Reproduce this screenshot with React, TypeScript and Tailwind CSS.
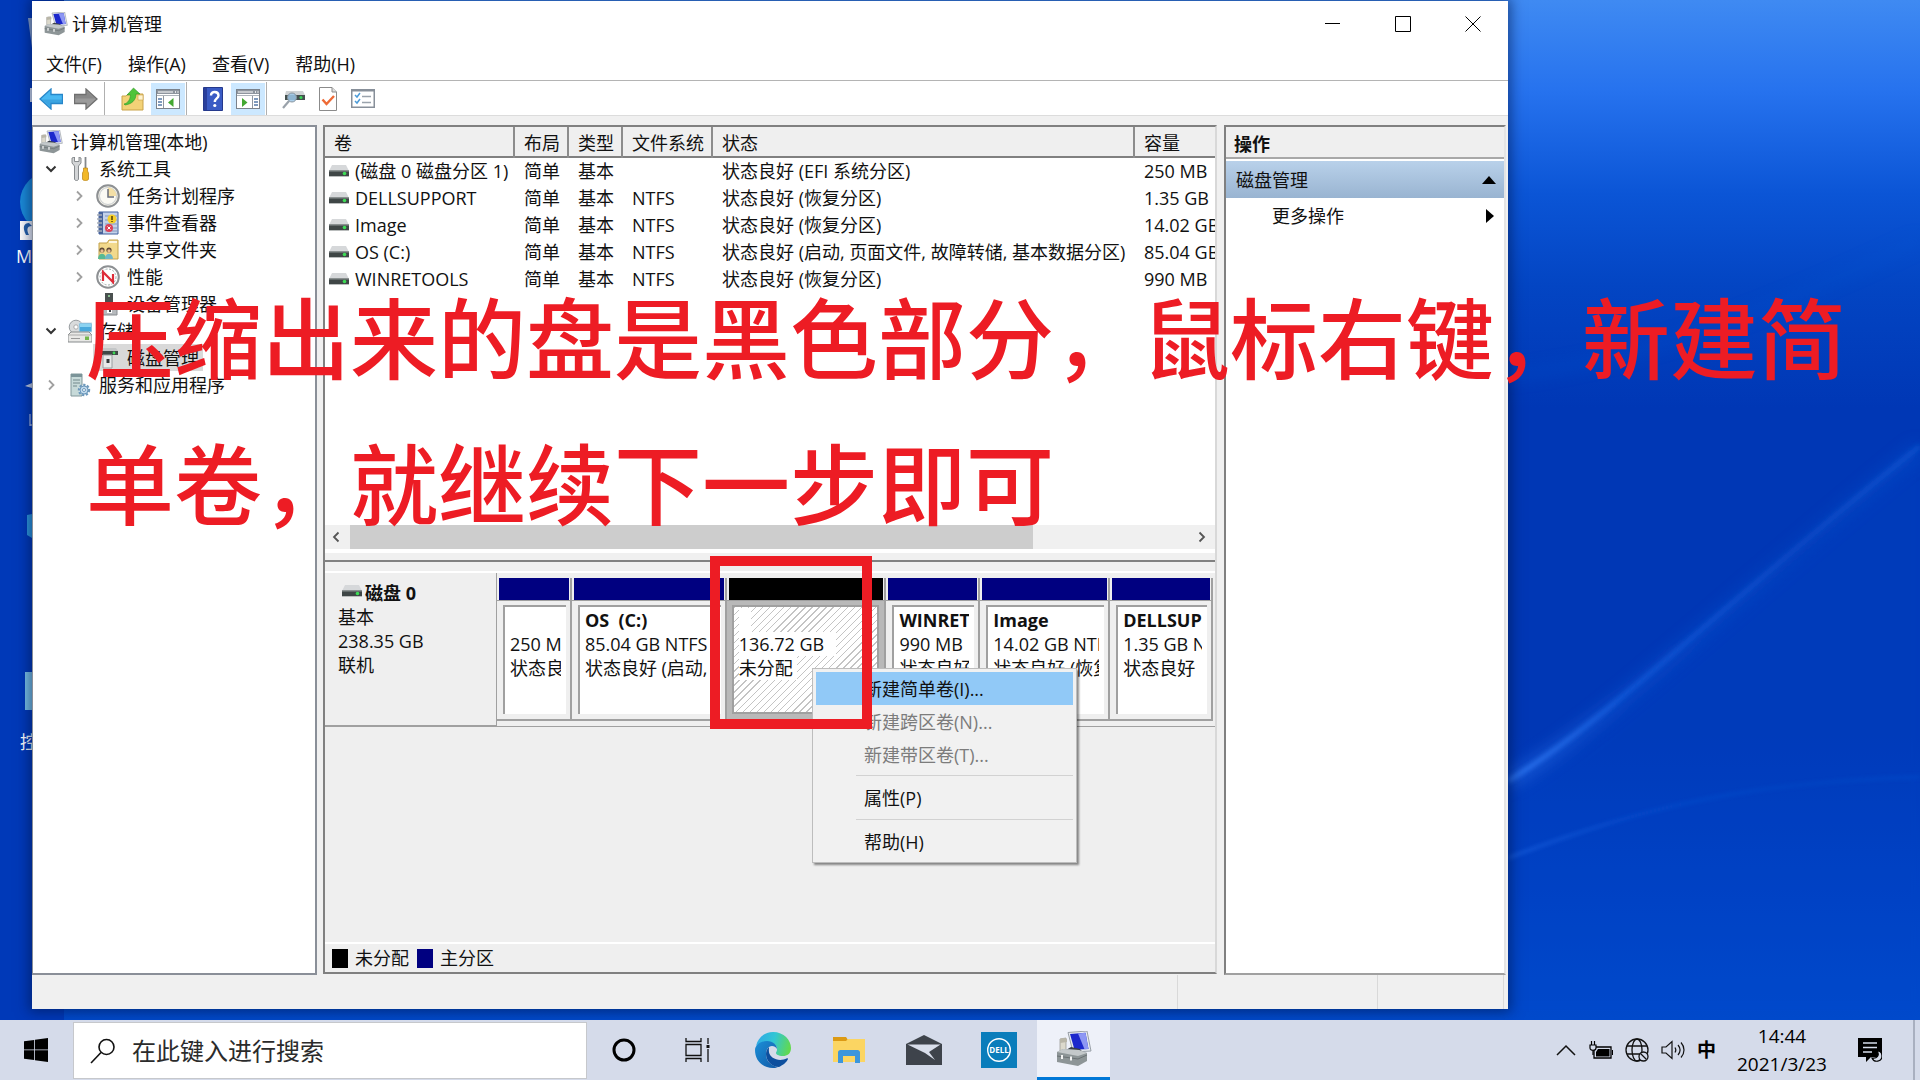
import type { ReactNode } from 'react'

type IconProps = { className?: string }

function ComputerIcon({ className = 'w-6 h-6' }: IconProps) {
  return (
    <svg viewBox="0 0 36 36" className={className}>
      <path d="M4 8l6-1v14l-6 1z" fill="#dcd9cc" stroke="#8f8f8a" strokeWidth=".7" />
      <path d="M4 8l3-1 4 1v3l-7 1z" fill="#b9b6a8" />
      <path d="M12 1.500L31 0l4 20-18 1z" fill="#e6eaef" stroke="#8f969e" strokeWidth=".9" />
      <path d="M14 3l15.500-1.200L32.500 18l-14 .8z" fill="#1c28cc" />
      <path d="M22 2.500l7.500-.7L32.500 18l-4 .2z" fill="#8d97f4" />
      <path d="M10 19l5-3 9 2 4 5H8z" fill="#3a3f46" />
      <path d="M1 21l6-3 16 1 8 3v8l-9 5-21-4z" fill="#8d9597" />
      <path d="M1 21l6-3 16 1 8 3-9 3z" fill="#c3c8ca" />
      <path d="M1 25l21 3 9-4" fill="none" stroke="#6a7174" />
      <path d="M6 24v4M15 25.500v4" stroke="#fff" strokeWidth="1.800" />
    </svg>
  )
}

function DriveIcon({ className = 'w-5 h-3' }: IconProps) {
  return (
    <svg viewBox="0 0 20 12" className={className}>
      <path d="M3 0h14l3 6H0z" fill="#d6d8da" />
      <path d="M0 5.500h20V11H0z" fill="#3f4646" />
      <path d="M0 5.500h20v1H0z" fill="#8a9090" />
      <circle cx="15.500" cy="8.500" r="1.800" fill="#3ddc55" />
      <path d="M0 11h20v1H0z" fill="#b9bcbc" />
    </svg>
  )
}

function Arrow({ dark, light, flip }: { dark: string; light: string; flip?: boolean }) {
  return (
    <svg viewBox="0 0 24 22" className={flip ? 'w-6 h-[22px] rotate-180' : 'w-6 h-[22px]'}>
      <path d="M1 11L12 1v5.500h11.500v9H12V21z" fill={light} stroke={dark} strokeWidth="1.300" />
      <path d="M3 11.500h20V15H11.500v4z" fill={dark} opacity=".4" />
    </svg>
  )
}

function FolderUpIcon() {
  return (
    <svg viewBox="0 0 24 24" className="w-6 h-6">
      <path d="M1 9h4l2-2h15v16H1z" fill="#f3d277" stroke="#c9a34a" />
      <path d="M17 8h5v5h-5z" fill="#fff3cf" stroke="#c9a34a" strokeWidth=".6" />
      <path d="M3 17c4-1 6-4 6.500-9H6l6.500-7L19 7h-4c0 6-4 10-11 11z" fill="#4fc43a" stroke="#2f9626" strokeWidth=".6" />
    </svg>
  )
}

function PaneIcon({ right }: { right?: boolean }) {
  return (
    <svg viewBox="0 0 24 20" className="w-6 h-5">
      <rect x=".5" y=".5" width="23" height="19" fill="#fff" stroke="#7b828b" />
      <path d="M1 1h22v4H1z" fill="#8e959e" />
      <path d="M2 3h15" stroke="#fff" />
      <path d="M19 3h1M21.500 3h1" stroke="#fff" strokeWidth="1.500" />
      <path d="M1 6.500h22" stroke="#aeb4bb" />
      {right ? (
        <>
          <path d="M16.500 7v12" stroke="#9097a0" />
          <path d="M18 10h4M18 13h4M18 16h4" stroke="#557aa8" strokeWidth="1.400" />
          <path d="M6 9v9l5.500-4.500z" fill="#43a832" />
        </>
      ) : (
        <>
          <path d="M7.500 7v12" stroke="#9097a0" />
          <path d="M2 10h4M2 13h4M2 16h4" stroke="#557aa8" strokeWidth="1.400" />
          <path d="M17.500 9v9L12 13.500z" fill="#43a832" />
        </>
      )}
    </svg>
  )
}

function HelpIcon() {
  return (
    <svg viewBox="0 0 20 24" className="w-5 h-6">
      <path d="M.5.5h19v23H.5z" fill="#3a5bc4" stroke="#25398c" />
      <path d="M1 1h3v22H1z" fill="#2a3f9c" />
      <path d="M8 8.500C8 3.500 15.500 4 15.500 8.500c0 3-3.700 3-3.700 6.500" fill="none" stroke="#fff" strokeWidth="2.400" />
      <circle cx="11.800" cy="18.500" r="1.600" fill="#fff" />
    </svg>
  )
}

function RescanIcon() {
  return (
    <svg viewBox="0 0 24 20" className="w-6 h-5">
      <path d="M5 2h17l2 4H4z" fill="#d0d3d5" />
      <path d="M4 6h20v5H4z" fill="#45514f" />
      <circle cx="20" cy="8.500" r="1.500" fill="#39d657" />
      <path d="M8 12l-6 7" stroke="#9aa2aa" strokeWidth="2.200" />
      <circle cx="11" cy="8.500" r="4.500" fill="#9cc7e8" fillOpacity=".85" stroke="#8b969f" />
    </svg>
  )
}

function CheckDocIcon() {
  return (
    <svg viewBox="0 0 18 24" className="w-[18px] h-6">
      <path d="M.5.5H13L17.500 5v18.500H.5z" fill="#fff" stroke="#8b8b8b" />
      <path d="M13 .5V5h4.500" fill="#ddd" stroke="#8b8b8b" />
      <path d="M3.500 12.500l4 4.500 7.500-8" fill="none" stroke="#ee6a36" strokeWidth="2.400" />
    </svg>
  )
}

function ListIcon() {
  return (
    <svg viewBox="0 0 24 19" className="w-6 h-[19px]">
      <rect x=".75" y=".75" width="22.500" height="17.500" fill="#fff" stroke="#878f99" strokeWidth="1.500" />
      <path d="M1 1.500h22" stroke="#878f99" strokeWidth="2" />
      <path d="M4 6l2 2 3-4M4 12l2 2 3-4" fill="none" stroke="#4b9bd8" strokeWidth="1.500" />
      <path d="M11 7.500h9M11 13.500h9" stroke="#9aa3ad" strokeWidth="1.500" />
    </svg>
  )
}

function ToolsIcon() {
  return (
    <svg viewBox="0 0 18 24" className="w-[18px] h-6">
      <path d="M1 1v5l2.500 3v13c0 2 4 2 4 0V9L10 6V1L8 0v4.500H3.500V0z" fill="#d3d5d7" stroke="#7d8185" strokeWidth=".9" />
      <path d="M14.500 0v12" stroke="#84888c" strokeWidth="1.800" />
      <path d="M12.500 11h4v3l1 2v6c0 2-6 2-6 0v-6l1-2z" fill="#f2b828" stroke="#b98213" strokeWidth=".7" />
    </svg>
  )
}

function ClockIcon() {
  return (
    <svg viewBox="0 0 24 24" className="w-6 h-6">
      <circle cx="12" cy="12" r="10.800" fill="#f2f0e6" stroke="#8d9093" strokeWidth="2" />
      <circle cx="12" cy="12" r="8.500" fill="#fbfaf4" stroke="#c9cdd0" />
      <path d="M12 12V3.500A8.500 8.500 0 0 1 20.500 12z" fill="#f3dfa6" />
      <path d="M12 5v8h6" fill="none" stroke="#6b6f7a" strokeWidth="1.500" />
    </svg>
  )
}

function EventIcon() {
  return (
    <svg viewBox="0 0 22 24" className="w-[22px] h-6">
      <path d="M2 1h19v22H2z" fill="#c4d2ea" stroke="#41619f" />
      <path d="M2 1h4v22H2z" fill="#47639c" />
      <path d="M8 5h12M8 9h12M8 13h12M8 17h12M8 20h12" stroke="#8497bb" />
      <path d="M0 4h5M0 8h5M0 12h5M0 16h5M0 20h5" stroke="#a6adb8" strokeWidth="1.500" />
      <circle cx="15" cy="8" r="4.500" fill="#f6cf2c" />
      <path d="M15 5v4M15 10v1" stroke="#443300" strokeWidth="1.400" />
      <circle cx="12" cy="17" r="4" fill="#dc4259" />
      <path d="M10.500 15.500l3 3m0-3l-3 3" stroke="#fff" />
    </svg>
  )
}

function SharedIcon() {
  return (
    <svg viewBox="0 0 22 22" className="w-[22px] h-[22px]">
      <path d="M2 4h8l2-3h9v19H2z" fill="#f2d98c" stroke="#c3a24b" />
      <path d="M12 3h8" stroke="#fff" strokeWidth="1.500" />
      <circle cx="5" cy="11" r="2.600" fill="#5e4a35" />
      <circle cx="12" cy="11" r="2.600" fill="#5e4a35" />
      <path d="M1 20c0-7 8-7 8 0z" fill="#58b993" />
      <path d="M8 20c0-7 8-7 8 0z" fill="#71b7c8" />
      <circle cx="5" cy="12" r="1.700" fill="#e9bd93" />
      <circle cx="12" cy="12" r="1.700" fill="#e9bd93" />
    </svg>
  )
}

function GaugeIcon() {
  return (
    <svg viewBox="0 0 24 24" className="w-6 h-6">
      <circle cx="12" cy="12" r="10.800" fill="#fff" stroke="#8d9093" strokeWidth="2" />
      <circle cx="12" cy="12" r="8" fill="none" stroke="#9cacaa" strokeDasharray="2 1.500" />
      <path d="M7 16V7l10 10V9" fill="none" stroke="#de2c38" strokeWidth="2.200" />
    </svg>
  )
}

function DeviceIcon() {
  return (
    <svg viewBox="0 0 20 24" className="w-5 h-6">
      <path d="M7 1h8v14H7z" fill="#4a504f" />
      <circle cx="11" cy="4" r="1" fill="#9fe6a7" />
      <path d="M0 14h19v9H0z" fill="#b6babd" stroke="#898d90" />
      <path d="M9 16h5v5H9z" fill="#fff" />
      <path d="M11 16h2v4h-2z" fill="#3d4447" />
    </svg>
  )
}

function StorageIcon() {
  return (
    <svg viewBox="0 0 24 24" className="w-6 h-6">
      <circle cx="8" cy="8" r="6.800" fill="#d9dbdc" stroke="#989da0" />
      <circle cx="8" cy="8" r="2.200" fill="#fff" stroke="#aaa" />
      <path d="M11 4h13v9H11z" fill="#49a9dc" stroke="#c9dbe5" />
      <path d="M12 5h11v3H12z" fill="#8bd3f1" />
      <path d="M3 13h18l3 3v7H0v-7z" fill="#e8e8e6" stroke="#878b8d" />
      <path d="M0 16h24" stroke="#aaa" />
      <path d="M17 17.500h4V21h-4z" fill="#73b64c" />
      <path d="M3 19.500h9" stroke="#999" />
    </svg>
  )
}

function DiskMgmtIcon() {
  return (
    <svg viewBox="0 0 20 22" className="w-5 h-[22px]">
      <path d="M3 1h15l2 3H1z" fill="#c3c6c7" />
      <path d="M1 4h19v4H1z" fill="#3f4746" />
      <circle cx="16" cy="6" r="1.400" fill="#3ed856" />
      <path d="M5 8h9v13H5z" fill="#e8e9ea" stroke="#9a9ea1" />
      <path d="M8.500 12h3v4h-3z" fill="#33383a" />
    </svg>
  )
}

function ServicesIcon() {
  return (
    <svg viewBox="0 0 22 24" className="w-[22px] h-6">
      <path d="M2 1h11v22H2z" fill="#c7dad9" stroke="#81989b" />
      <path d="M2 1h11v3H2z" fill="#7b9499" />
      <path d="M4 7h7M4 10h7M4 13h4" stroke="#73898c" />
      <circle cx="15" cy="17" r="5" fill="#d6e6f2" stroke="#6c98bb" strokeWidth="2.400" strokeDasharray="2.200 1.500" />
      <circle cx="15" cy="17" r="4" fill="#c2dbed" stroke="#6c98bb" />
      <circle cx="15" cy="17" r="1.500" fill="#fff" stroke="#6c98bb" />
    </svg>
  )
}

function EdgeIcon({ className = 'w-9 h-9' }: IconProps) {
  return (
    <svg viewBox="0 0 36 36" className={className}>
      <defs>
        <linearGradient id="edgeTop" x1="0" y1=".3" x2="1" y2=".5">
          <stop offset="0" stopColor="#2fa9e6" />
          <stop offset=".5" stopColor="#31c6d4" />
          <stop offset="1" stopColor="#62d94e" />
        </linearGradient>
        <linearGradient id="edgeLow" x1="0" y1="0" x2="1" y2="1">
          <stop offset="0" stopColor="#1b8fd8" />
          <stop offset="1" stopColor="#1259a6" />
        </linearGradient>
      </defs>
      <path d="M1 14C3 5 10 0 18 0c11 0 18 8 18 16 0 6-4 8-8 8-5 0-7-2-7-3 0-1 1-1 1-4 0-4-4-7-9-7-6 0-11 3-12 4z" fill="url(#edgeTop)" />
      <path d="M0 18c0-5 6-9 12-9 6 0 10 4 10 8-1-2-3-3-5-3-4 0-6 4-6 8 0 7 5 12 12 13-2 1-4 1-5 1C7 36 0 28 0 18z" fill="url(#edgeLow)" />
      <path d="M14 15c-2 2-3 4-3 7 0 7 6 13 13 13 4-2 8-5 9-8 0-1-.5-1-1-.7-8 4-17 0-18-6-.3-2 0-4 0-5.300z" fill="#0d4f9e" />
    </svg>
  )
}

function ExplorerIcon() {
  return (
    <svg viewBox="0 0 32 28" className="w-8 h-7">
      <path d="M0 1h13l2 3-2 3H0z" fill="#dc9a14" />
      <path d="M0 5h13l2-2h17v23H0z" fill="#fbd562" />
      <path d="M5 27V16.500C5 15 6 14 7.500 14h17c1.500 0 2.500 1 2.500 2.500V27h-5v-7H10v7z" fill="#3c96dc" />
    </svg>
  )
}

function MailIcon() {
  return (
    <svg viewBox="0 0 36 30" className="w-9 h-[30px]">
      <path d="M0 9L18 0l18 9v21H0z" fill="#3e434b" />
      <path d="M1.500 9.500h33L23 17l6 8-10-7z" fill="#d9deeb" />
    </svg>
  )
}

function DellIcon() {
  return (
    <svg viewBox="0 0 36 36" className="w-9 h-9">
      <path d="M0 0h36v36H0z" fill="#0a7dbb" />
      <circle cx="18" cy="18" r="11.300" fill="none" stroke="#fff" strokeWidth="1.400" />
      <text x="18" y="21" textAnchor="middle" fontSize="8" fontWeight="700" fill="#fff" fontFamily="Open Sans, sans-serif">DELL</text>
    </svg>
  )
}

function TaskViewIcon() {
  return (
    <svg viewBox="0 0 25 24" className="w-[25px] h-6" fill="none" stroke="#111" strokeWidth="1.300">
      <path d="M1 0v3.500h15V0M1 24v-3.500h15V24M1 6.500h15v11H1zM23 0v6M23 11v13" />
      <path d="M21.500 7h3v3h-3z" fill="#111" stroke="none" />
    </svg>
  )
}

const columns = ['卷', '布局', '类型', '文件系统', '状态', '容量']

const volumes = [
  ['(磁盘 0 磁盘分区 1)', '简单', '基本', '', '状态良好 (EFI 系统分区)', '250 MB'],
  ['DELLSUPPORT', '简单', '基本', 'NTFS', '状态良好 (恢复分区)', '1.35 GB'],
  ['Image', '简单', '基本', 'NTFS', '状态良好 (恢复分区)', '14.02 GB'],
  ['OS (C:)', '简单', '基本', 'NTFS', '状态良好 (启动, 页面文件, 故障转储, 基本数据分区)', '85.04 GB'],
  ['WINRETOOLS', '简单', '基本', 'NTFS', '状态良好 (恢复分区)', '990 MB'],
]

const partitions = [
  { name: '', size: '250 MB', status: '状态良好' },
  { name: 'OS  (C:)', size: '85.04 GB NTFS', status: '状态良好 (启动,' },
  { name: '', size: '136.72 GB', status: '未分配', free: true },
  { name: 'WINRETOOLS', size: '990 MB', status: '状态良好' },
  { name: 'Image', size: '14.02 GB NTFS', status: '状态良好 (恢复' },
  { name: 'DELLSUPPORT', size: '1.35 GB NTFS', status: '状态良好' },
]

function Chevron({ open }: { open?: boolean }) {
  return open ? (
    <svg viewBox="0 0 12 12" className="w-3 h-3">
      <path d="M1.500 3.500L6 8l4.500-4.500" fill="none" stroke="#333" strokeWidth="2" />
    </svg>
  ) : (
    <svg viewBox="0 0 12 12" className="w-3 h-3">
      <path d="M4 1.500L8.500 6 4 10.500" fill="none" stroke="#a0a0a0" strokeWidth="1.800" />
    </svg>
  )
}

interface TreeRowProps {
  level: 1 | 2
  icon: ReactNode
  label: string
  open?: boolean
  leaf?: boolean
  selected?: boolean
}

function TreeRow({ level, icon, label, open, leaf, selected }: TreeRowProps) {
  return (
    <li className={level === 1 ? 'flex items-center h-[27px] pl-3' : 'flex items-center h-[27px] pl-10'}>
      <span className="w-3 shrink-0">{!leaf && <Chevron open={open} />}</span>
      <span className={selected ? 'flex items-center h-full ml-2 pr-1 bg-[#d9d9d9]' : 'flex items-center h-full ml-2 pr-1'}>
        <span className="w-[30px] shrink-0 flex justify-center">{icon}</span>
        <span className="ml-1 whitespace-nowrap">{label}</span>
      </span>
    </li>
  )
}

function ToolButton({ children, active, label }: { children: ReactNode; active?: boolean; label: string }) {
  return (
    <button
      aria-label={label}
      className={active ? 'w-[34px] h-8 flex items-center justify-center bg-[#cce8ff]' : 'w-[34px] h-8 flex items-center justify-center'}
    >
      {children}
    </button>
  )
}

function TitleBar() {
  return (
    <div className="flex items-center h-[47px] pl-3 pb-[2px]">
      <ComputerIcon />
      <h1 className="ml-1 flex-1">计算机管理</h1>
      <button aria-label="最小化" className="w-[70px] h-full flex items-center justify-center">
        <svg viewBox="0 0 16 16" className="w-4 h-4"><path d="M0 7.500h15" stroke="#000" /></svg>
      </button>
      <button aria-label="最大化" className="w-[70px] h-full flex items-center justify-center">
        <svg viewBox="0 0 16 16" className="w-4 h-4"><path d="M.5.5h15v15H.5z" fill="none" stroke="#000" /></svg>
      </button>
      <button aria-label="关闭" className="w-[70px] h-full flex items-center justify-center">
        <svg viewBox="0 0 16 16" className="w-4 h-4"><path d="M.5.5l15 15m0-15l-15 15" stroke="#000" /></svg>
      </button>
    </div>
  )
}

function Toolbar() {
  return (
    <div className="flex items-center h-9 pt-px pl-[2px] border-y border-[#b4b4b4] border-b-[#dcdcdc] gap-px">
      <ToolButton label="后退"><Arrow dark="#2786c9" light="#49b8f2" /></ToolButton>
      <ToolButton label="前进"><Arrow dark="#6f6f6f" light="#9a9a9a" flip /></ToolButton>
      <span className="w-px h-full bg-[#b0b0b0] mr-[10px]" />
      <ToolButton label="向上"><FolderUpIcon /></ToolButton>
      <ToolButton label="控制台树" active><PaneIcon /></ToolButton>
      <span className="w-px h-full bg-[#b0b0b0] mr-2" />
      <ToolButton label="帮助"><HelpIcon /></ToolButton>
      <ToolButton label="操作窗格" active><PaneIcon right /></ToolButton>
      <span className="w-px h-full bg-[#b0b0b0] mr-2" />
      <ToolButton label="重新扫描"><RescanIcon /></ToolButton>
      <ToolButton label="检查"><CheckDocIcon /></ToolButton>
      <ToolButton label="列表"><ListIcon /></ToolButton>
    </div>
  )
}

function Tree() {
  return (
    <nav className="w-[285px] shrink-0 bg-white border-2 border-[#8a8f98] border-l pt-px">
      <div className="flex items-center h-[27px] pl-[6px]">
        <ComputerIcon />
        <span className="ml-2">计算机管理(本地)</span>
      </div>
      <ul>
        <TreeRow level={1} open icon={<ToolsIcon />} label="系统工具" />
        <TreeRow level={2} icon={<ClockIcon />} label="任务计划程序" />
        <TreeRow level={2} icon={<EventIcon />} label="事件查看器" />
        <TreeRow level={2} icon={<SharedIcon />} label="共享文件夹" />
        <TreeRow level={2} icon={<GaugeIcon />} label="性能" />
        <TreeRow level={2} leaf icon={<DeviceIcon />} label="设备管理器" />
        <TreeRow level={1} open icon={<StorageIcon />} label="存储" />
        <TreeRow level={2} leaf selected icon={<DiskMgmtIcon />} label="磁盘管理" />
        <TreeRow level={1} icon={<ServicesIcon />} label="服务和应用程序" />
      </ul>
    </nav>
  )
}

function VolumeList() {
  return (
    <div className="h-[435px] shrink-0 flex flex-col bg-white border-b-2 border-[#808080]">
      <div className="flex-1 overflow-hidden">
        <table className="w-full table-fixed border-collapse">
          <colgroup>
            <col className="w-[189px]" />
            <col className="w-[54px]" />
            <col className="w-[54px]" />
            <col className="w-[90px]" />
            <col className="w-[422px]" />
            <col />
          </colgroup>
          <thead>
            <tr className="h-[30px] bg-[#efefef] border-b-2 border-[#808080]">
              {columns.map((c) => (
                <th key={c} className="pl-[9px] pt-[3px] font-normal text-left whitespace-nowrap border-r-2 border-[#8c8c8c] last:border-r-0">{c}</th>
              ))}
            </tr>
          </thead>
          <tbody>
            {volumes.map((row) => (
              <tr key={row[0]} className="h-[27px]">
                {row.map((cell, i) => (
                  <td key={i} className={i === 0 ? 'pl-1 whitespace-nowrap' : 'pl-[10px] whitespace-nowrap overflow-hidden'}>
                    {i === 0 ? <span className="flex items-center gap-[6px]"><DriveIcon />{cell}</span> : cell}
                  </td>
                ))}
              </tr>
            ))}
          </tbody>
        </table>
      </div>
      <div className="flex h-6 bg-[#f0f0f0]">
        <button aria-label="向左滚动" className="w-[25px] pr-1 flex items-center justify-center">
          <svg viewBox="0 0 8 12" className="w-2 h-3"><path d="M6.500 1.500L2 6l4.500 4.500" fill="none" stroke="#555" strokeWidth="1.800" /></svg>
        </button>
        <div className="flex-1">
          <div className="w-[81.500%] h-full bg-[#cdcdcd]" />
        </div>
        <button aria-label="向右滚动" className="w-[27px] flex items-center justify-center">
          <svg viewBox="0 0 8 12" className="w-2 h-3"><path d="M1.500 1.500L6 6l-4.500 4.500" fill="none" stroke="#555" strokeWidth="1.800" /></svg>
        </button>
      </div>
      <div className="h-[11px] bg-[#f0f0f0] border-t-4 border-white" />
    </div>
  )
}

function DiskMap() {
  return (
    <div className="flex h-[156px] mt-[9px] border-t-2 border-white">
      <div className="w-[172px] shrink-0 pl-[13px] pt-2 border-r border-b-2 border-[#a0a0a0] leading-6">
        <div className="flex items-center font-bold gap-[3px]"><DriveIcon className="w-5 h-3 ml-1 -mt-1" />磁盘 0</div>
        <div>基本</div>
        <div>238.35 GB</div>
        <div>联机</div>
      </div>
      <div className="flex-1 min-w-0 pt-[5px] pb-[5px] pr-[2px] border-b border-[#a0a0a0]">
        <div className="grid h-full grid-cols-[75fr_155fr_160fr_94fr_130fr_103fr] border-b-2 border-[#a0a0a0]">
          {partitions.map((p) => (
            <div key={p.size} className="min-w-0 flex flex-col border-r-2 border-[#a0a0a0]">
              <div className={p.free ? 'h-[22px] ml-[2px] mr-px bg-black' : 'h-[22px] ml-[2px] mr-px bg-[#000080]'} />
              <div className={p.free ? 'flex-1 min-h-0 p-[5px] pt-1 bg-[#b9b9b9] border-t border-[#a0a0a0]' : 'flex-1 min-h-0 pt-1 pb-[5px] pl-[6px] pr-[4px] border-t border-[#a0a0a0]'}>
                <div
                  className={
                    p.free
                      ? 'h-full px-[5px] pt-px border-2 border-[#a0a0a0] bg-[repeating-linear-gradient(135deg,#c4c4c4_0_1px,#ffffff_1px_5px)] leading-6'
                      : 'h-full pl-[5px] pr-[5px] pt-px border-t-2 border-l-2 border-[#a0a0a0] bg-white leading-6'
                  }
                >
                  <div className="h-6 overflow-hidden font-bold whitespace-pre">{p.free ? <span className="inline-block w-3 h-6 bg-white" /> : p.name}</div>
                  <div className="h-6 overflow-hidden whitespace-nowrap"><span className={p.free ? 'inline-block bg-white pr-3' : ''}>{p.size}</span></div>
                  <div className="h-6 overflow-hidden whitespace-nowrap"><span className={p.free ? 'inline-block bg-white pr-1' : ''}>{p.status}</span></div>
                </div>
              </div>
            </div>
          ))}
        </div>
      </div>
    </div>
  )
}

function ActionsPane() {
  return (
    <aside className="w-[282px] shrink-0 bg-white border-2 border-[#808080] border-r-[#e4e4e4] border-b-[#a0a0a0]">
      <h2 className="h-8 flex items-center pl-2 pt-1 font-bold bg-[#efefef] border-b-2 border-[#a8a8a8]">操作</h2>
      <button className="w-full h-[37px] mt-[2px] pl-[10px] pr-2 flex items-center justify-between bg-linear-to-b from-[#b9d1ea] to-[#99b4d1]">
        磁盘管理
        <svg viewBox="0 0 14 8" className="w-[14px] h-2"><path d="M7 0l7 8H0z" /></svg>
      </button>
      <button className="w-full h-9 pl-[46px] pr-[10px] flex items-center justify-between">
        更多操作
        <svg viewBox="0 0 8 14" className="w-2 h-[14px]"><path d="M0 0l8 7-8 7z" /></svg>
      </button>
    </aside>
  )
}

function ContextMenu() {
  return (
    <div className="absolute left-[812px] top-[668px] w-[265px] p-[3px] bg-[#f1f1f1] border border-[#bdbdbd] shadow-[2px_2px_2px_rgba(0,0,0,0.45)] flex flex-col">
      <button className="h-[33px] pl-12 text-left bg-[#91c9f7]">新建简单卷(I)...</button>
      <button disabled className="h-[33px] pl-12 text-left text-[#7c7c7c]">新建跨区卷(N)...</button>
      <button disabled className="h-[33px] pl-12 text-left text-[#7c7c7c]">新建带区卷(T)...</button>
      <hr className="ml-10 my-1 border-[#d2d2d2]" />
      <button className="h-[35px] pl-12 text-left">属性(P)</button>
      <hr className="ml-10 my-1 border-[#d2d2d2]" />
      <button className="h-[35px] pl-12 text-left">帮助(H)</button>
    </div>
  )
}

function Wallpaper() {
  return (
    <svg viewBox="0 0 412 1020" preserveAspectRatio="none" className="absolute right-0 top-0 w-[412px] h-full">
      <defs>
        <filter id="soft" x="-10%" y="-20%" width="120%" height="140%"><feGaussianBlur stdDeviation="8" /></filter>
        <filter id="fine"><feGaussianBlur stdDeviation="2" /></filter>
        <linearGradient id="streak" x1="0" y1="0" x2="1" y2="0">
          <stop offset="0" stopColor="#3b86ff" />
          <stop offset=".3" stopColor="#1560e0" />
          <stop offset=".7" stopColor="#0a4fcb" />
          <stop offset="1" stopColor="#0b58d4" />
        </linearGradient>
      </defs>
      <path d="M-10 795C110 728 220 604 422 446V1020H-10z" fill="#0047cc" opacity=".25" filter="url(#soft)" />
      <path d="M0 782C100 722 220 604 412 448" fill="none" stroke="url(#streak)" strokeWidth="12" opacity=".5" filter="url(#soft)" />
      <path d="M0 781C100 720 220 600 412 446" fill="none" stroke="url(#streak)" strokeWidth="5" opacity=".6" filter="url(#fine)" />
      <path d="M0 858C120 812 230 782 412 777" fill="none" stroke="url(#streak)" strokeWidth="2" opacity=".6" filter="url(#fine)" />
      <path d="M0 376C90 365 200 340 412 240" fill="none" stroke="#0b55d0" strokeWidth="8" opacity=".35" filter="url(#soft)" />
    </svg>
  )
}

// Shortcuts that stick out to the left of the window
function DesktopShortcuts() {
  return (
    <div className="absolute left-0 top-0 w-8 h-full overflow-hidden text-white">
      <svg viewBox="0 0 32 760" className="absolute left-0 top-0 w-8 h-[760px]">
        <path d="M28 18l4 30V18z" fill="#8ea6cc" />
        <path d="M30 88h2v14h-2z" fill="#dfe6f5" />
        <circle cx="50" cy="202" r="30" fill="#1b8bd8" />
        <path d="M20 221h12v19H20z" fill="#fff" />
        <path d="M32 226c-6 0-5 5-3 9h-3c-4-8-2-12 3-12z" fill="#2561a8" />
        <path d="M25 386l7-3v5z" fill="#cdd7e8" />
        <path d="M30 414v12M30 425h2" stroke="#dfe6f5" />
        <path d="M27 515l5-1v24l-5-3z" fill="#2e9be0" />
        <path d="M25 672h7v38h-7z" fill="#7cc4e8" />
      </svg>
      <span className="absolute left-4 top-[244px]">M</span>
      <span className="absolute left-5 top-[730px]">控</span>
    </div>
  )
}

function Taskbar() {
  return (
    <footer className="relative h-[60px] shrink-0 flex items-center bg-[#d5dbea] text-black">
      <button aria-label="开始" className="w-[73px] pr-px h-full flex items-center justify-center">
        <svg viewBox="0 0 24 24" className="w-6 h-6"><path d="M0 3.300L10.200 2v9.500H0zM11 1.800L24 0v11.500H11zM0 12.300h10.200V22L0 20.700zM11 12.300h13V24l-13-1.800z" /></svg>
      </button>
      <label className="w-[514px] h-[57px] flex items-center gap-4 pl-4 pt-px bg-white border border-[#c6c8cc]">
        <svg viewBox="0 0 26 26" className="w-[26px] h-[26px]" fill="none" stroke="#111" strokeWidth="1.600">
          <circle cx="16.500" cy="9" r="7.500" /><path d="M11 14.500L1 25" />
        </svg>
        <input aria-label="搜索" placeholder="在此键入进行搜索" className="flex-1 min-w-0 text-[24px] leading-8 outline-none placeholder:text-[#2b2b2b]" />
      </label>
      <button aria-label="Cortana" className="w-[73px] h-full flex items-center justify-center">
        <svg viewBox="0 0 24 24" className="w-6 h-6"><circle cx="12" cy="12" r="10" fill="none" stroke="#000" strokeWidth="3" /></svg>
      </button>
      <button aria-label="任务视图" className="w-[74px] h-full flex items-center justify-center"><TaskViewIcon /></button>
      <button aria-label="Edge" className="w-[77px] h-full flex items-center justify-center"><EdgeIcon /></button>
      <button aria-label="文件资源管理器" className="w-[75px] h-full flex items-center justify-center"><ExplorerIcon /></button>
      <button aria-label="邮件" className="w-[75px] h-full flex items-center justify-center"><MailIcon /></button>
      <button aria-label="Dell" className="w-[76px] h-full flex items-center justify-center"><DellIcon /></button>
      <button aria-label="计算机管理" className="w-[73px] h-full flex items-center justify-center bg-[#eef1f9] border-b-3 border-[#0078d7]">
        <ComputerIcon className="w-9 h-9" />
      </button>
      <div className="ml-auto flex items-center h-full">
        <svg viewBox="0 0 20 12" className="w-5 h-3 mr-[13px]"><path d="M1 11l9-9 9 9" fill="none" stroke="#111" strokeWidth="1.500" /></svg>
        <svg viewBox="0 0 24 18" className="w-6 h-[18px] mr-3">
          <path d="M5 6h17v11H5z" fill="none" stroke="#000" strokeWidth="1.300" />
          <path d="M9 8h11.500v7.500H7V11z" />
          <path d="M23 9h1v5h-1z" />
          <path d="M1 4h6v3c0 3-6 3-6 0zM2.500 4V0M5.500 4V0M4 9v5" fill="#d5dbea" stroke="#000" strokeWidth="1.200" />
        </svg>
        <svg viewBox="0 0 24 24" className="w-6 h-6 mr-3" fill="none" stroke="#111" strokeWidth="1.300">
          <circle cx="12" cy="12" r="11" />
          <ellipse cx="12" cy="12" rx="5" ry="11" />
          <path d="M2 8h20M2 16h20" />
          <circle cx="18.500" cy="18.500" r="4.500" fill="#d5dbea" />
          <path d="M15.500 15.500l6 6" />
        </svg>
        <svg viewBox="0 0 24 20" className="w-6 h-5 mr-3" fill="none" stroke="#111" strokeWidth="1.200">
          <path d="M1 7h4l6-5.500v17L5 13H1z" />
          <path d="M14 7.500c1 1.500 1 3.500 0 5M17 5c2.500 3 2.500 7 0 10M20 2.500c4 4.500 4 10.500 0 15" />
        </svg>
        <span className="text-[19px] font-bold w-5">中</span>
        <div className="w-[98px] ml-4 mr-[14px] text-center text-[19px] leading-7">
          <div>14:44</div>
          <div>2021/3/23</div>
        </div>
        <button aria-label="通知" className="ml-[13px] mr-[31px]">
          <svg viewBox="0 0 24 25" className="w-6 h-[25px]">
            <path d="M0 0h24v19H13l-5 5v-5H0z" />
            <path d="M5 5h14M5 9.500h14M5 14h9" stroke="#d5dbea" strokeWidth="1.300" />
            <path d="M19 13c3 4 0 8-5 7 2 5 10 4 10-2 0-3-2-5-5-5z" fill="#d5dbea" stroke="#000" strokeWidth="1.200" />
          </svg>
        </button>
        <span className="w-[7px] h-full border-l-2 border-[#a9b0c0]" />
      </div>
    </footer>
  )
}

export default function App() {
  return (
    <div lang="zh-CN" className="relative min-h-screen flex flex-col overflow-hidden text-[18px] leading-6 text-[#111] font-['Open_Sans','Noto_Sans_CJK_SC',sans-serif]">
      <main className="relative flex-1 flex pt-px pb-[11px] pl-8 pr-[412px] bg-[linear-gradient(180deg,#3f8af2_0%,#2672ee_9%,#0b55d6_19%,#0345c3_28%,#0037b5_40%,#0037b5_72%,#0040c2_87%,#004acb_100%)]">
        <Wallpaper />
        <div className="absolute left-0 top-0 w-16 h-full bg-[#0039b8]" />
        <DesktopShortcuts />
        <section className="relative flex-1 min-w-0 flex flex-col bg-white shadow-[0_0_12px_3px_rgba(0,20,70,0.55)]">
          <TitleBar />
          <div className="flex items-center h-8 pl-[14px] gap-[26px]">
            <button>文件(F)</button>
            <button>操作(A)</button>
            <button>查看(V)</button>
            <button>帮助(H)</button>
          </div>
          <Toolbar />
          <div className="flex-1 flex pt-[9px] pr-[2px] bg-[#f0f0f0]">
            <Tree />
            <div className="flex-1 min-w-0 ml-[6px] mr-[7px] mb-px flex flex-col border-2 border-[#808080] border-r-[#d8d8d8] bg-[#efefef]">
              <VolumeList />
              <DiskMap />
              <div className="mt-auto h-[30px] flex items-center pl-[7px] border-t-2 border-white">
                <span className="w-4 h-[19px] bg-black" />
                <span className="ml-[7px]">未分配</span>
                <span className="w-4 h-[19px] ml-2 bg-[#000080]" />
                <span className="ml-[7px]">主分区</span>
              </div>
            </div>
            <ActionsPane />
          </div>
          <div className="h-[34px] flex bg-[#f0f0f0] justify-end">
            <span className="w-[200px] border-l border-[#d9d9d9]" />
            <span className="w-[127px] border-x border-[#d9d9d9] mr-1" />
          </div>
        </section>
      </main>
      <Taskbar />
      <ContextMenu />
      <div className="absolute left-[710px] top-[556px] w-[162px] h-[173px] border-10 border-[#ed1c24]" />
      <p className="absolute left-[86px] top-[265px] w-[1770px] font-medium text-[88px] leading-[146px] text-[#ed1c24] pointer-events-none">
        压缩出来的盘是黑色部分，鼠标右键，新建简单卷，就继续下一步即可
      </p>
    </div>
  )
}
